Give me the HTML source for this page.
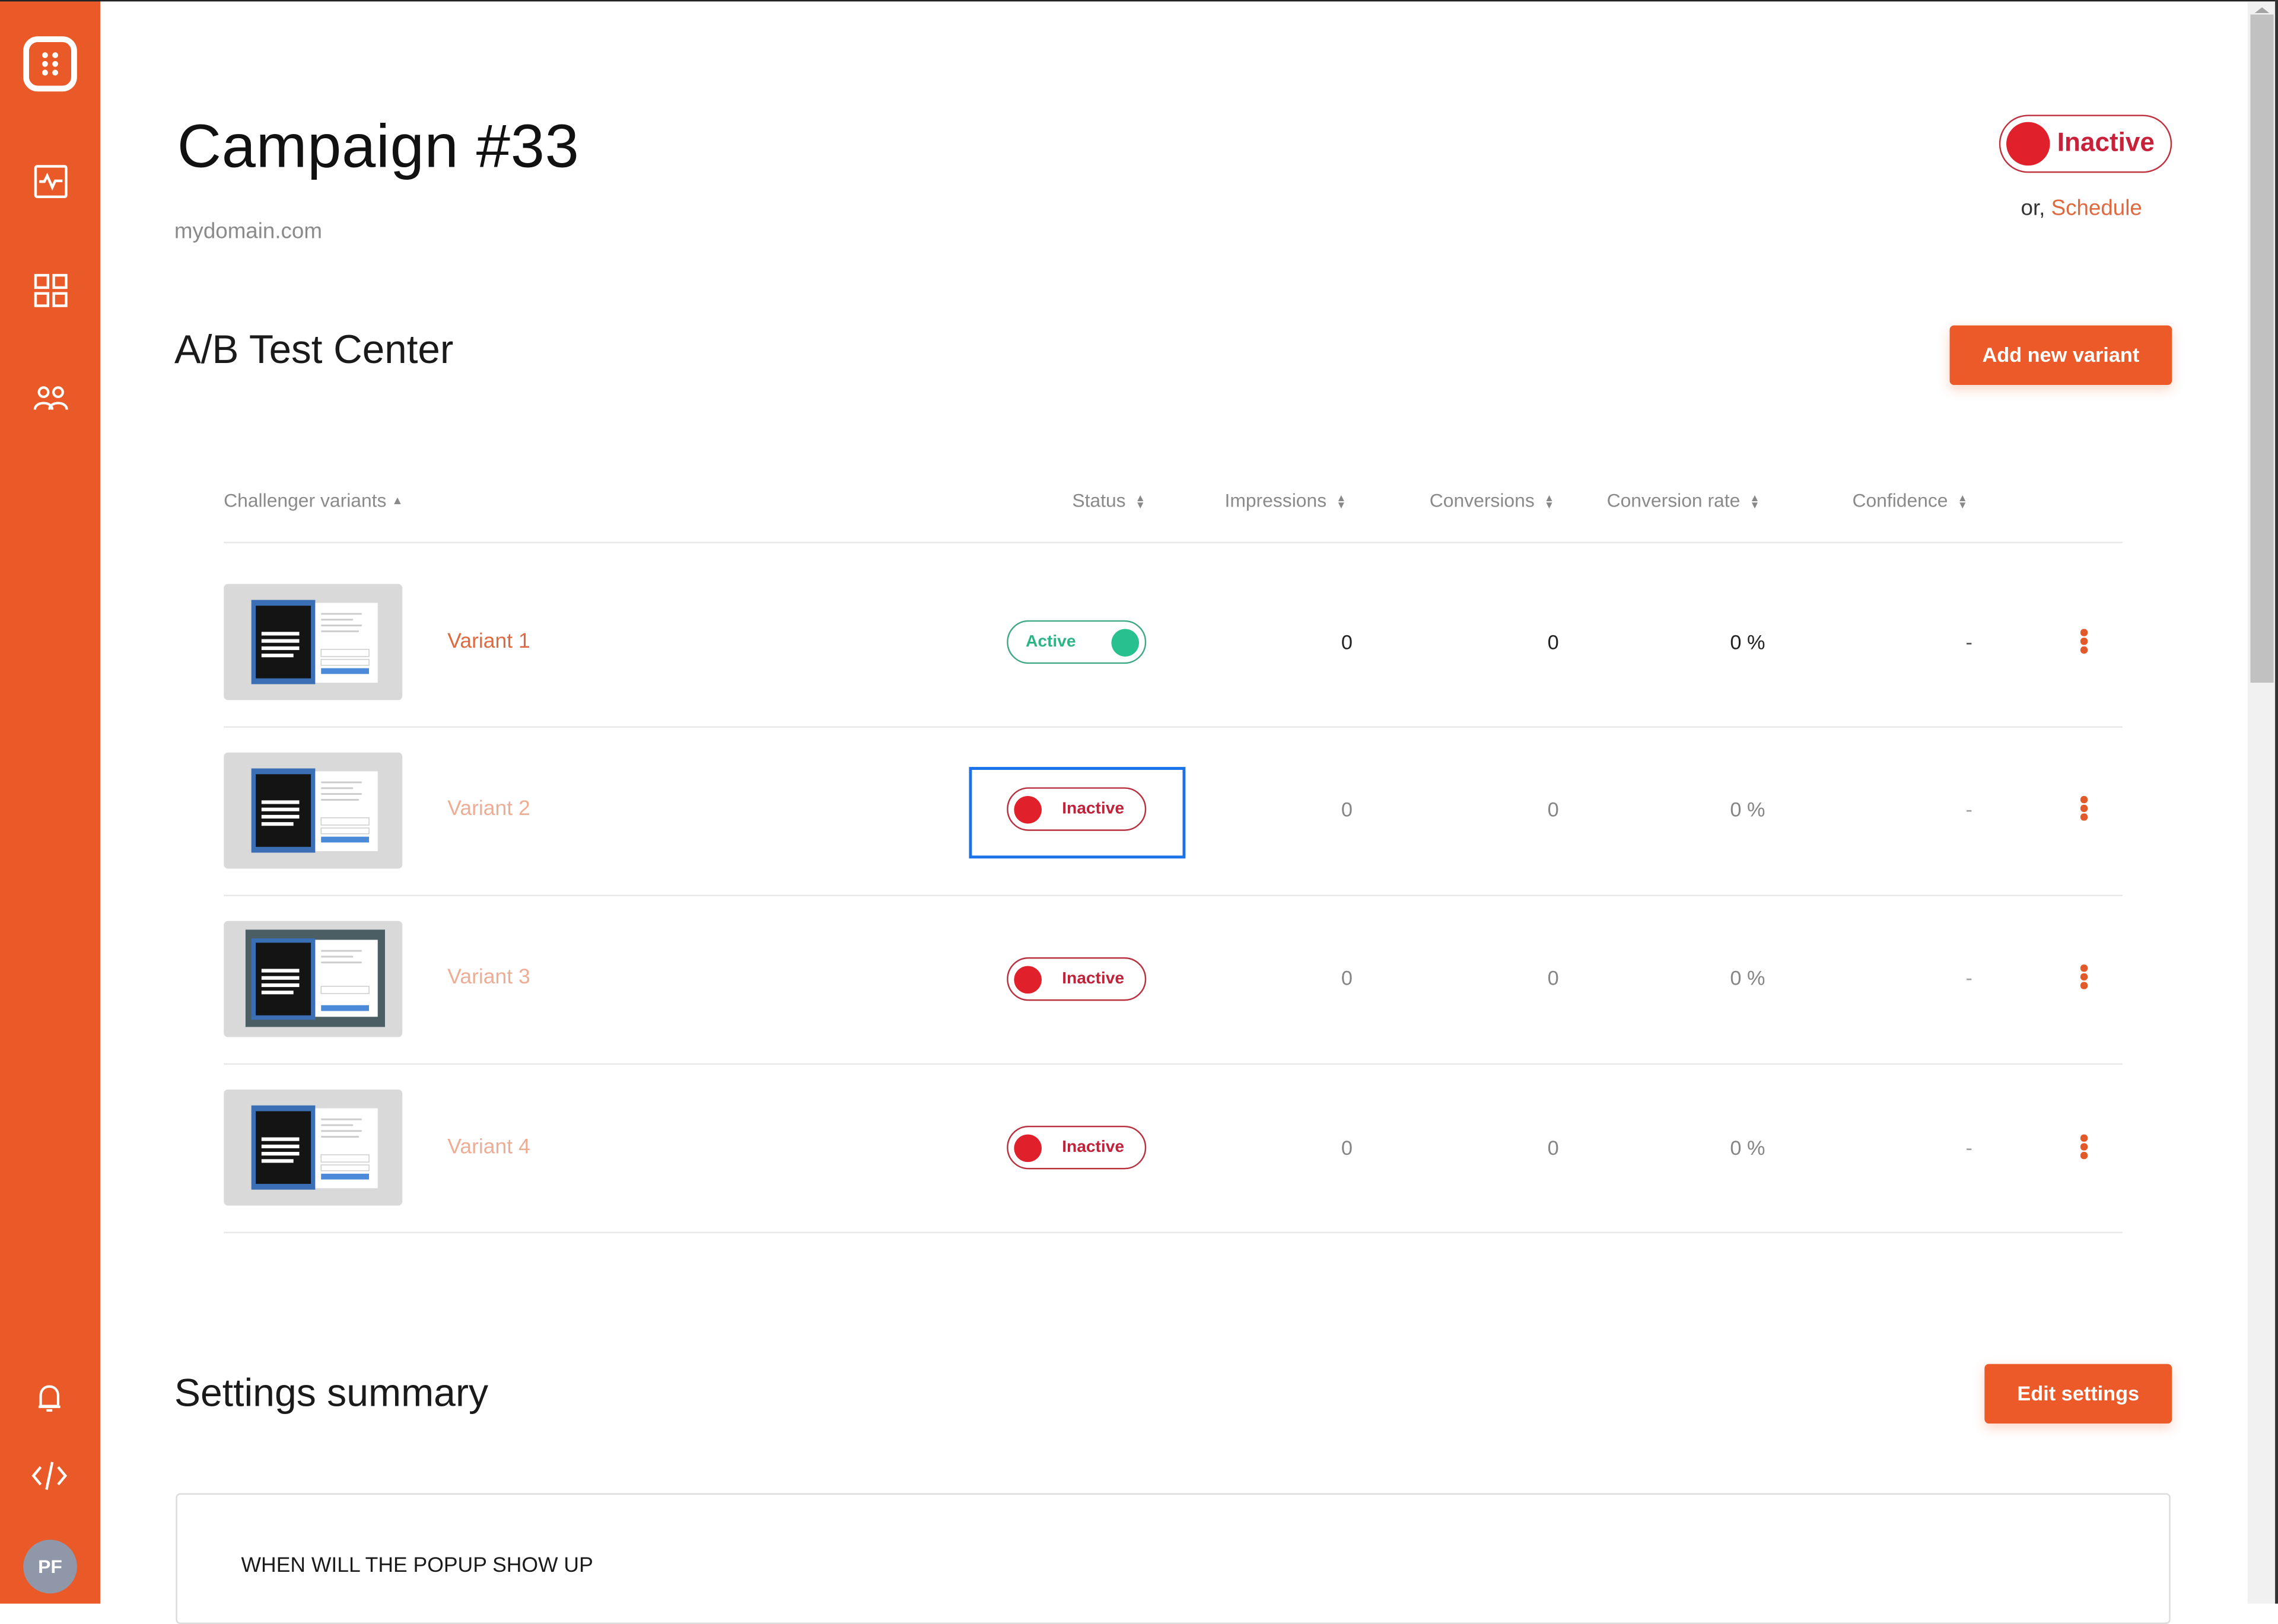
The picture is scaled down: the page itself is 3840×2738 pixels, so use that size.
<!DOCTYPE html>
<html><head><meta charset="utf-8"><style>
*{margin:0;padding:0;box-sizing:border-box}
html,body{width:3840px;height:2702px;overflow:hidden;background:#fff}
#w{position:absolute;left:0;top:0;width:1568px;height:1104px;transform:scale(2.44898);transform-origin:0 0;font-family:"Liberation Sans",Arial,sans-serif;color:#1c1c1c}
.a{position:absolute}
.side{left:0;top:0;width:69px;height:1104px;background:#ea5a28}
.topbar{left:0;top:0;width:1568px;height:1.3px;background:#222}
.hd{font-size:13px;color:#8a8a8a;top:337px;white-space:nowrap}
.sort{display:inline-block;margin-left:3px;vertical-align:-1px;font-size:7px;line-height:5px;color:#888}
.line{left:154px;width:1307px;height:1px;background:#e8e8e8}
.vname{left:308px;font-size:14.5px;color:#e0683e;white-space:nowrap}
.num{font-size:14px;color:#222;text-align:right;width:60px}
.pill{width:96px;height:30px;border:1.3px solid #b9303f;border-radius:15px;background:#fff}
.pill .d{position:absolute;left:4px;top:4.5px;width:19px;height:19px;border-radius:50%;background:#e0202a}
.pill .t{position:absolute;left:37px;top:8px;font-size:11.5px;font-weight:bold;color:#c0223a}
.dots{width:5px}
.dots i{display:block;width:4.6px;height:4.6px;border-radius:50%;background:#e25a2a;margin-bottom:1.5px}
.btn{background:#eb5a28;color:#fff;font-weight:bold;font-size:14px;border-radius:3px;text-align:center;box-shadow:0 3px 8px rgba(235,90,40,.25)}
.fade{opacity:.55}
</style></head><body><div id="w">
<div class="a side"></div>
<div class="a topbar"></div>
<svg class="a" style="left:15px;top:24px" width="40" height="40" viewBox="0 0 40 40"><rect x="3" y="3" width="33" height="34" rx="8" fill="none" stroke="#fff" stroke-width="4"/><g fill="#fff"><circle cx="16" cy="14" r="2"/><circle cx="23" cy="14" r="2"/><circle cx="16" cy="20" r="2"/><circle cx="23" cy="20" r="2"/><circle cx="16" cy="26" r="2"/><circle cx="23" cy="26" r="2"/></g></svg>
<svg class="a" style="left:23px;top:113px" width="24" height="24" viewBox="0 0 24 24" fill="none" stroke="#fff" stroke-width="1.8"><rect x="1.5" y="1.5" width="21" height="21" rx="1"/><path d="M4 12 L7.5 12 L9.5 8 L13 16 L15 11.5 L20 11.5"/></svg>
<svg class="a" style="left:23px;top:188px" width="24" height="24" viewBox="0 0 24 24" fill="none" stroke="#fff" stroke-width="1.8"><rect x="1.5" y="1.5" width="8.5" height="8.5"/><rect x="14" y="1.5" width="8.5" height="8.5"/><rect x="1.5" y="14" width="8.5" height="8.5"/><rect x="14" y="14" width="8.5" height="8.5"/></svg>
<svg class="a" style="left:23px;top:265px" width="24" height="20" viewBox="0 0 24 20" fill="none" stroke="#fff" stroke-width="1.7"><circle cx="7" cy="5" r="3.2"/><circle cx="17" cy="5" r="3.2"/><path d="M1 17 C1 11 13 11 13 17"/><path d="M11 17 C11 11 23 11 23 17"/></svg>
<svg class="a" style="left:24px;top:952px" width="20" height="22" viewBox="0 0 20 22" fill="none" stroke="#fff" stroke-width="1.7"><path d="M4 16 V9 C4 5 6.5 2.5 10 2.5 C13.5 2.5 16 5 16 9 V16 Z M2.5 16.5 H17.5"/><path d="M8 19 H12"/></svg>
<svg class="a" style="left:21px;top:1005px" width="26" height="22" viewBox="0 0 26 22" fill="none" stroke="#fff" stroke-width="1.8"><path d="M7 5 L2 11 L7 17"/><path d="M19 5 L24 11 L19 17"/><path d="M15 1.5 L11 20.5"/></svg>
<div class="a" style="left:16px;top:1060px;width:37px;height:37px;border-radius:50%;background:#8f97a8;color:#fff;font-size:13px;font-weight:bold;text-align:center;line-height:37px">PF</div>
<div class="a" style="left:1547px;top:1px;width:21px;height:1103px;background:#f1f1f1"></div>
<div class="a" style="left:1549px;top:10px;width:16px;height:460px;background:#c1c1c1"></div>
<div class="a" style="left:1566px;top:0;width:2px;height:1104px;background:#333"></div>
<div class="a" style="left:1552px;top:5px;width:0;height:0;border-left:5px solid transparent;border-right:5px solid transparent;border-bottom:4px solid #a3a3a3"></div>
<div class="a" style="left:122px;top:77px;font-size:42px;color:#111;white-space:nowrap;letter-spacing:0.3px">Campaign #33</div>
<div class="a" style="left:120px;top:151px;font-size:15px;color:#8a8a8a">mydomain.com</div>
<div class="a" style="left:1376px;top:79px;width:119px;height:40px;border:1.5px solid #c0303f;border-radius:20px">
 <div class="a" style="left:4px;top:4px;width:30px;height:30px;border-radius:50%;background:#e0202a"></div>
 <div class="a" style="left:39px;top:8px;font-size:18px;font-weight:bold;color:#c8213a">Inactive</div>
</div>
<div class="a" style="left:1391px;top:135px;font-size:15px;color:#333;white-space:nowrap">or, <span style="color:#e0683e">Schedule</span></div>
<div class="a" style="left:120px;top:225px;font-size:27.5px;color:#1a1a1a;white-space:nowrap">A/B Test Center</div>
<div class="a btn" style="left:1342px;top:224px;width:153px;height:41px;line-height:41px">Add new variant</div>
<div class="a hd" style="left:154px">Challenger variants <span style="font-size:8px;vertical-align:2px">&#9650;</span></div>
<div class="a hd" style="left:738px">Status <span class="sort">&#9650;<br>&#9660;</span></div>
<div class="a hd" style="left:843px">Impressions <span class="sort">&#9650;<br>&#9660;</span></div>
<div class="a hd" style="left:984px">Conversions <span class="sort">&#9650;<br>&#9660;</span></div>
<div class="a hd" style="left:1106px">Conversion rate <span class="sort">&#9650;<br>&#9660;</span></div>
<div class="a hd" style="left:1275px">Confidence <span class="sort">&#9650;<br>&#9660;</span></div>
<div class="a line" style="top:373px"></div>
<div class="a line" style="top:500px"></div>
<div class="a line" style="top:616px"></div>
<div class="a line" style="top:732px"></div>
<div class="a line" style="top:848px"></div>

<svg class="a" style="left:154px;top:402px" width="123" height="80" viewBox="0 0 123 80"><rect width="123" height="80" rx="3" fill="#d9d9d9"/><rect x="19" y="11" width="44" height="58" fill="#3a6fb5"/><rect x="22" y="15" width="38" height="50" fill="#141414"/><rect x="63" y="13" width="43" height="55" fill="#fff"/><g fill="#fff"><rect x="26" y="33" width="26" height="2.5"/><rect x="26" y="38" width="26" height="2.5"/><rect x="26" y="43" width="26" height="2.5"/><rect x="26" y="48" width="22" height="2.5"/></g><g fill="#ccc"><rect x="67" y="20" width="28" height="1.2"/><rect x="67" y="24" width="22" height="1.2"/><rect x="67" y="28" width="28" height="1.2"/><rect x="67" y="32" width="26" height="1.2"/></g><rect x="67" y="45" width="33" height="5" fill="none" stroke="#ccc" stroke-width=".6"/><rect x="67" y="52" width="33" height="4" fill="none" stroke="#ccc" stroke-width=".6"/><rect x="67" y="58" width="33" height="4" fill="#4a8ad8"/></svg>
<svg class="a" style="left:154px;top:518px" width="123" height="80" viewBox="0 0 123 80"><rect width="123" height="80" rx="3" fill="#d9d9d9"/><rect x="19" y="11" width="44" height="58" fill="#3a6fb5"/><rect x="22" y="15" width="38" height="50" fill="#141414"/><rect x="63" y="13" width="43" height="55" fill="#fff"/><g fill="#fff"><rect x="26" y="33" width="26" height="2.5"/><rect x="26" y="38" width="26" height="2.5"/><rect x="26" y="43" width="26" height="2.5"/><rect x="26" y="48" width="22" height="2.5"/></g><g fill="#ccc"><rect x="67" y="20" width="28" height="1.2"/><rect x="67" y="24" width="22" height="1.2"/><rect x="67" y="28" width="28" height="1.2"/><rect x="67" y="32" width="26" height="1.2"/></g><rect x="67" y="45" width="33" height="5" fill="none" stroke="#ccc" stroke-width=".6"/><rect x="67" y="52" width="33" height="4" fill="none" stroke="#ccc" stroke-width=".6"/><rect x="67" y="58" width="33" height="4" fill="#4a8ad8"/></svg>
<svg class="a" style="left:154px;top:634px" width="123" height="80" viewBox="0 0 123 80"><rect width="123" height="80" rx="3" fill="#d9d9d9"/><rect x="15" y="6" width="96" height="67" fill="#4a5e63"/><rect x="19" y="12" width="44" height="56" fill="#3a6fb5"/><rect x="22" y="15" width="38" height="50" fill="#141414"/><rect x="63" y="13" width="43" height="53" fill="#fff"/><g fill="#fff"><rect x="26" y="33" width="26" height="2.5"/><rect x="26" y="38" width="26" height="2.5"/><rect x="26" y="43" width="26" height="2.5"/><rect x="26" y="48" width="22" height="2.5"/></g><g fill="#ccc"><rect x="67" y="20" width="28" height="1.2"/><rect x="67" y="24" width="22" height="1.2"/><rect x="67" y="28" width="28" height="1.2"/></g><rect x="67" y="45" width="33" height="5" fill="none" stroke="#ccc" stroke-width=".6"/><rect x="67" y="58" width="33" height="4" fill="#4a8ad8"/></svg>
<svg class="a" style="left:154px;top:750px" width="123" height="80" viewBox="0 0 123 80"><rect width="123" height="80" rx="3" fill="#d9d9d9"/><rect x="19" y="11" width="44" height="58" fill="#3a6fb5"/><rect x="22" y="15" width="38" height="50" fill="#141414"/><rect x="63" y="13" width="43" height="55" fill="#fff"/><g fill="#fff"><rect x="26" y="33" width="26" height="2.5"/><rect x="26" y="38" width="26" height="2.5"/><rect x="26" y="43" width="26" height="2.5"/><rect x="26" y="48" width="22" height="2.5"/></g><g fill="#ccc"><rect x="67" y="20" width="28" height="1.2"/><rect x="67" y="24" width="22" height="1.2"/><rect x="67" y="28" width="28" height="1.2"/><rect x="67" y="32" width="26" height="1.2"/></g><rect x="67" y="45" width="33" height="5" fill="none" stroke="#ccc" stroke-width=".6"/><rect x="67" y="52" width="33" height="4" fill="none" stroke="#ccc" stroke-width=".6"/><rect x="67" y="58" width="33" height="4" fill="#4a8ad8"/></svg>

<div class="a vname" style="top:434px">Variant 1</div>
<div class="a pill" style="left:693px;top:427px;border-color:#3fa887"><div class="a" style="left:12px;top:8px;font-size:11.5px;font-weight:bold;color:#2bb585">Active</div><div class="a" style="right:4px;top:4.5px;width:19px;height:19px;border-radius:50%;background:#27c08e"></div></div>
<div class="a num" style="left:871px;top:434px">0</div>
<div class="a num" style="left:1013px;top:434px">0</div>
<div class="a num" style="left:1155px;top:434px">0 %</div>
<div class="a" style="left:1353px;top:434px;font-size:14px;color:#555">-</div>
<div class="a dots" style="left:1432px;top:433px"><i></i><i></i><i></i></div>

<div class="a vname fade" style="top:549px">Variant 2</div>
<div class="a" style="left:667px;top:528px;width:149px;height:63px;border:2.5px solid #1a73e8"></div>
<div class="a pill" style="left:693px;top:542px"><div class="d"></div><div class="t">Inactive</div></div>
<div class="a num fade" style="left:871px;top:549px">0</div>
<div class="a num fade" style="left:1013px;top:549px">0</div>
<div class="a num fade" style="left:1155px;top:549px">0 %</div>
<div class="a fade" style="left:1353px;top:549px;font-size:14px;color:#555">-</div>
<div class="a dots" style="left:1432px;top:548px"><i></i><i></i><i></i></div>

<div class="a vname fade" style="top:665px">Variant 3</div>
<div class="a pill" style="left:693px;top:659px"><div class="d"></div><div class="t">Inactive</div></div>
<div class="a num fade" style="left:871px;top:665px">0</div>
<div class="a num fade" style="left:1013px;top:665px">0</div>
<div class="a num fade" style="left:1155px;top:665px">0 %</div>
<div class="a fade" style="left:1353px;top:665px;font-size:14px;color:#555">-</div>
<div class="a dots" style="left:1432px;top:664px"><i></i><i></i><i></i></div>

<div class="a vname fade" style="top:782px">Variant 4</div>
<div class="a pill" style="left:693px;top:775px"><div class="d"></div><div class="t">Inactive</div></div>
<div class="a num fade" style="left:871px;top:782px">0</div>
<div class="a num fade" style="left:1013px;top:782px">0</div>
<div class="a num fade" style="left:1155px;top:782px">0 %</div>
<div class="a fade" style="left:1353px;top:782px;font-size:14px;color:#555">-</div>
<div class="a dots" style="left:1432px;top:781px"><i></i><i></i><i></i></div>

<div class="a" style="left:120px;top:944px;font-size:27px;color:#1a1a1a;white-space:nowrap">Settings summary</div>
<div class="a btn" style="left:1366px;top:939px;width:129px;height:41px;line-height:41px">Edit settings</div>
<div class="a" style="left:121px;top:1028px;width:1373px;height:90px;border:1px solid #dcdcdc;border-radius:3px;background:#fff"></div>
<div class="a" style="left:166px;top:1070px;font-size:14.5px;color:#1a1a1a;white-space:nowrap">WHEN WILL THE POPUP SHOW UP</div>
</div></body></html>
